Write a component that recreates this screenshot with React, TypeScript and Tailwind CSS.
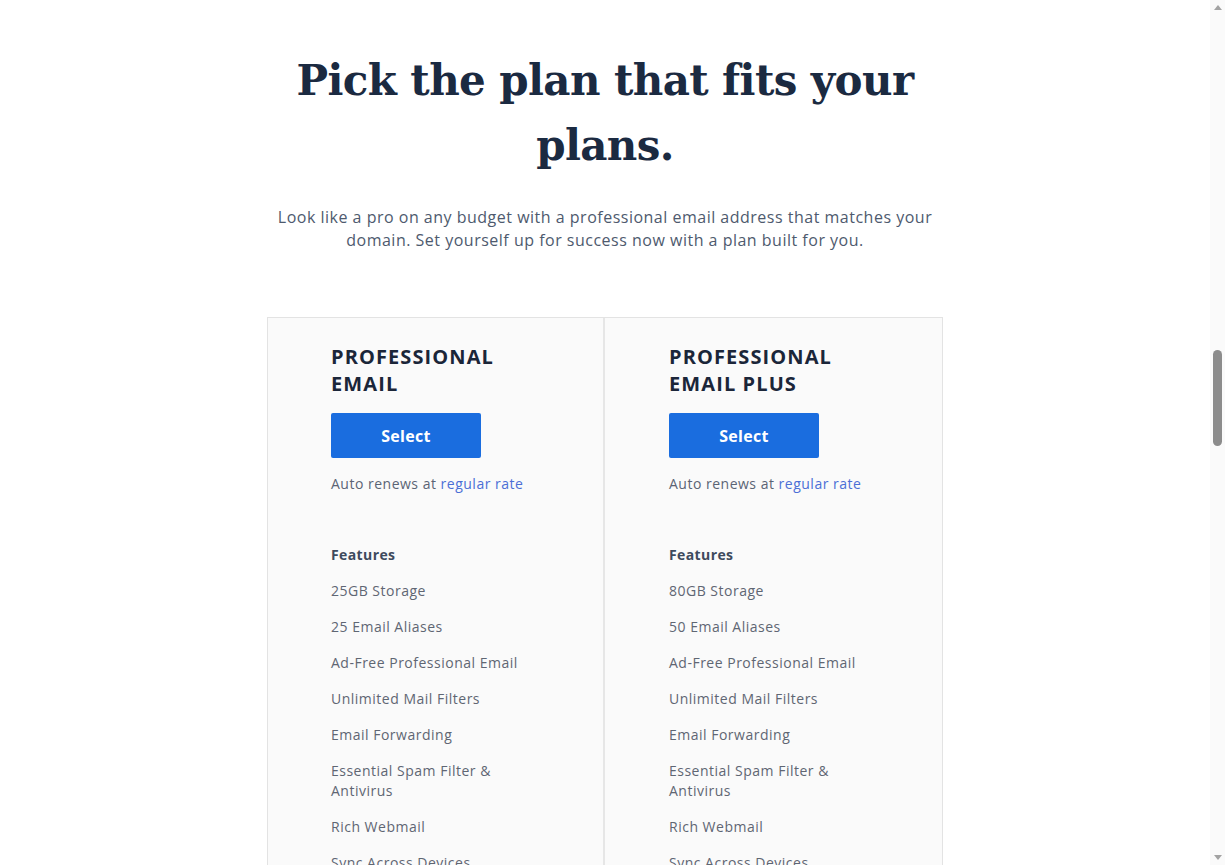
import React from "react";

type Plan = {
  name: string[];
  features: string[];
};

const plans: Plan[] = [
  {
    name: ["PROFESSIONAL", "EMAIL"],
    features: [
      "25GB Storage",
      "25 Email Aliases",
      "Ad-Free Professional Email",
      "Unlimited Mail Filters",
      "Email Forwarding",
      "Essential Spam Filter & Antivirus",
      "Rich Webmail",
      "Sync Across Devices",
    ],
  },
  {
    name: ["PROFESSIONAL", "EMAIL PLUS"],
    features: [
      "80GB Storage",
      "50 Email Aliases",
      "Ad-Free Professional Email",
      "Unlimited Mail Filters",
      "Email Forwarding",
      "Essential Spam Filter & Antivirus",
      "Rich Webmail",
      "Sync Across Devices",
    ],
  },
];

function PlanColumn({ plan, first }: { plan: Plan; first: boolean }) {
  return (
    <div
      className={`pt-[25px] pr-16 pb-10 ${
        first ? "border-r-2 border-[#e6e6e6] pl-[63px]" : "pl-16"
      }`}
    >
      <h3 className="text-[20px] leading-[27px] font-bold tracking-[1.1px] text-[#1b2639]">
        {plan.name[0]}
        <br />
        {plan.name[1]}
      </h3>
      <button
        type="button"
        className="mt-4 flex h-[45px] w-[150px] items-center justify-center rounded-[2px] bg-[#1a6ddf] text-[16px] font-bold tracking-[0.3px] text-white"
      >
        Select
      </button>
      <p className="mt-4 text-[14px] leading-5 tracking-[0.5px] text-[#5b6475]">
        Auto renews at <span className="text-[#4b6fd6]">regular rate</span>
      </p>

      <p className="mt-[51px] text-[14px] leading-5 font-bold tracking-[0.4px] text-[#3e4a5d]">
        Features
      </p>
      <ul className="mt-4 flex flex-col gap-4">
        {plan.features.map((f) => (
          <li key={f} className="text-[14px] leading-5 tracking-[0.5px] text-[#5f6673]">
            {f}
          </li>
        ))}
      </ul>
    </div>
  );
}

function Scrollbar() {
  return (
    <div className="flex h-full w-[15px] shrink-0 flex-col items-center bg-[#fafafa]">
      <div className="flex h-[15px] w-full items-center justify-center">
        <svg width="8" height="5" viewBox="0 0 8 5">
          <path d="M0 5 L4 0 L8 5 Z" fill="#a3a3a3" />
        </svg>
      </div>
      <div className="mt-[335px] h-[96px] w-[9px] rounded-full bg-[#8c8c8c]" />
      <div className="flex-1" />
      <div className="flex h-[15px] w-full items-center justify-center">
        <svg width="8" height="5" viewBox="0 0 8 5">
          <path d="M0 0 L4 5 L8 0 Z" fill="#a3a3a3" />
        </svg>
      </div>
    </div>
  );
}

export default function App() {
  return (
    <div
      className="flex h-screen w-full overflow-hidden bg-white"
      style={{ fontFamily: '"Open Sans", "Liberation Sans", sans-serif' }}
    >
      <main className="flex flex-1 flex-col items-center overflow-hidden pt-[48px]">
        <h1
          className="max-w-[680px] text-center text-[42px] leading-[65px] font-bold tracking-[-0.6px] text-[#1b2a41]"
          style={{ fontFamily: '"DejaVu Serif", "Liberation Serif", serif' }}
        >
          Pick the plan that fits your plans.
        </h1>
        <p className="mt-7 max-w-[680px] text-center text-[16px] leading-[23px] tracking-[0.5px] text-[#4e5a6e]">
          Look like a pro on any budget with a professional email address that matches your
          domain. Set yourself up for success now with a plan built for you.
        </p>

        <div className="mt-[65px] grid w-[676px] shrink-0 grid-cols-2 border border-[#e3e3e3] bg-[#fafafa]">
          {plans.map((p, i) => (
            <PlanColumn key={p.name.join(" ")} plan={p} first={i === 0} />
          ))}
        </div>
      </main>
      <Scrollbar />
    </div>
  );
}
